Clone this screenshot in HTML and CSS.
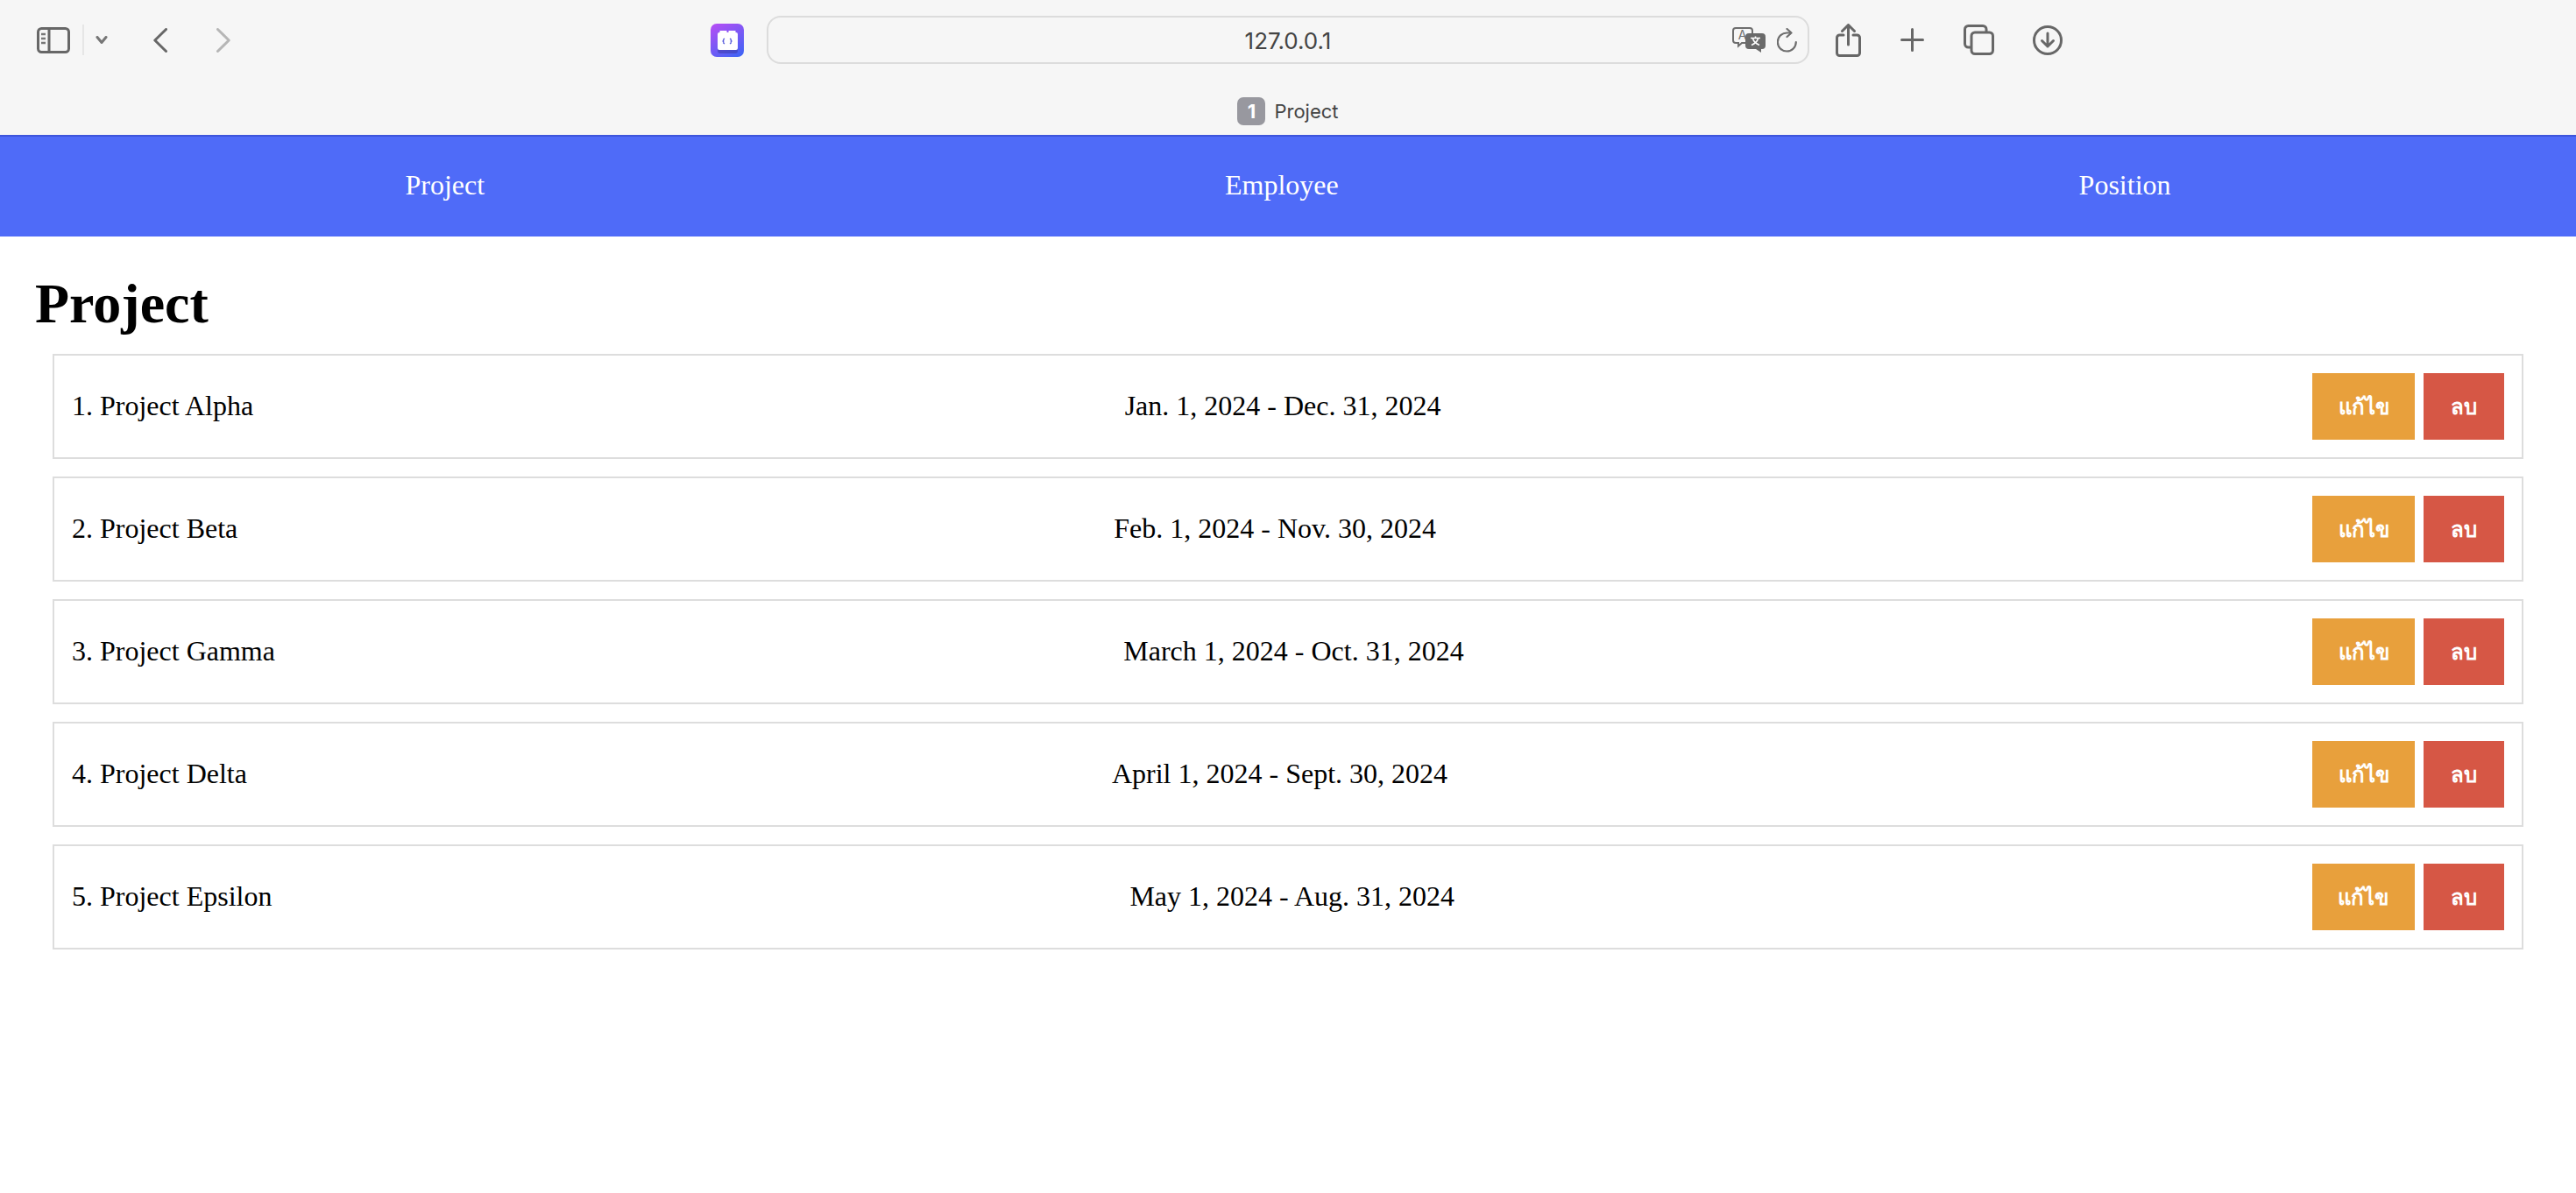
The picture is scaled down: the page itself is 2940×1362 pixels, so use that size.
FILE: index.html
```html
<!DOCTYPE html>
<html lang="th">

<head>
  <meta charset="UTF-8">
  <meta name="viewport" content="width=device-width, initial-scale=1.0">
  <title>Project</title>
  <link rel="stylesheet" href="styles.css">
</head>

<body>

  <div class="browser">
    <div class="toolbar">
      <svg class="ic sidebar-ic" width="38" height="30" viewBox="0 0 38 30" fill="none" stroke="#676767" stroke-width="3">
        <rect x="1.500" y="1.500" width="35" height="27" rx="4"/>
        <path d="M14 1.500v27"/>
        <path d="M5 8h5M5 13h5M5 18h5" stroke-width="2.400" stroke="#777"/>
      </svg>
      <div class="sep"></div>
      <svg class="ic chevron-ic" width="14" height="9" viewBox="0 0 14 9" fill="none" stroke="#767676" stroke-width="3" stroke-linecap="round" stroke-linejoin="round">
        <path d="M2 1.500l5 6 5-6"/>
      </svg>
      <svg class="ic back-ic" width="16" height="28" viewBox="0 0 16 28" fill="none" stroke="#676767" stroke-width="3" stroke-linecap="round" stroke-linejoin="round">
        <path d="M14.500 1.500L1.800 14l12.700 12.500"/>
      </svg>
      <svg class="ic forward-ic" width="16" height="28" viewBox="0 0 16 28" fill="none" stroke="#b6b6b6" stroke-width="3" stroke-linecap="round" stroke-linejoin="round">
        <path d="M1.500 1.500L14.200 14 1.500 26.500"/>
      </svg>

      <svg class="ic favicon" width="38" height="38" viewBox="0 0 38 38">
        <defs>
          <linearGradient id="favGrad" x1="0.2" y1="0" x2="0.8" y2="1">
            <stop offset="0" stop-color="#b04ff5"/>
            <stop offset="1" stop-color="#4263f5"/>
          </linearGradient>
        </defs>
        <rect width="38" height="38" rx="7" fill="url(#favGrad)"/>
        <rect x="8" y="26" width="23" height="8" rx="3" fill="#3a3aa8" opacity="0.55"/>
        <path d="M8 12a2 2 0 0 1 2-2h0.500v-2h8v2h2v-2h8v2h0.500a2 2 0 0 1 2 2v16a2 2 0 0 1-2 2H10a2 2 0 0 1-2-2z" fill="#fff"/>
        <path d="M16 17l-1.200 0.800v1.400l-0.800 0.800 0.800 0.800v1.400l1.200 0.800M22 17l1.200 0.800v1.400l0.800 0.800-0.800 0.800v1.400l-1.200 0.800" fill="none" stroke="#4a4fd8" stroke-width="1.200"/>
      </svg>

      <div class="address">
        <span class="url">127.0.0.1</span>
        <svg class="ic translate-ic" width="38" height="29" viewBox="0 0 38 29">
          <path d="M4 1h16a3 3 0 0 1 3 3v11a3 3 0 0 1-3 3h-9l-4 3.500v-3.500h-3a3 3 0 0 1-3-3v-11a3 3 0 0 1 3-3z" fill="none" stroke="#6e6e6e" stroke-width="2"/>
          <text x="11.500" y="14" class="translate-a">A</text>
          <path d="M19 7h15a4 4 0 0 1 4 4v10a4 4 0 0 1-4 4h-1v4l-6-4h-8a4 4 0 0 1-4-4v-10a4 4 0 0 1 4-4z" fill="#6a6a6a"/>
          <path d="M21 12.500h11M26.500 10.500v2M23.500 13c1 3.500 4 6 7.500 7.500M29.500 13c-1 3.500-4 6-7.500 7.500" fill="none" stroke="#fff" stroke-width="1.600"/>
        </svg>
        <svg class="ic reload-ic" width="23" height="28" viewBox="0 0 23 28" fill="none" stroke="#6e6e6e" stroke-width="2.200" stroke-linecap="round" stroke-linejoin="round">
          <path d="M21.800 16a10.500 10.500 0 1 1-10.500-10.500h4"/>
          <path d="M11.500 1l5 4.500-5 4.500"/>
        </svg>
      </div>

      <svg class="ic share-ic" width="29" height="38" viewBox="0 0 29 38" fill="none" stroke="#676767" stroke-width="3" stroke-linecap="round" stroke-linejoin="round">
        <path d="M9 13H4.500a3 3 0 0 0-3 3v17.500a3 3 0 0 0 3 3h20a3 3 0 0 0 3-3V16a3 3 0 0 0-3-3H20"/>
        <path d="M14.500 24V2M7.500 8.500l7-7 7 7"/>
      </svg>
      <svg class="ic plus-ic" width="27" height="27" viewBox="0 0 27 27" fill="none" stroke="#676767" stroke-width="3" stroke-linecap="round">
        <path d="M13.500 1.500v24M1.500 13.500h24"/>
      </svg>
      <svg class="ic tabs-ic" width="35" height="35" viewBox="0 0 35 35" fill="none" stroke="#676767" stroke-width="3" stroke-linejoin="round">
        <path d="M8 26H5.500a4 4 0 0 1-4-4V5.500a4 4 0 0 1 4-4H22a4 4 0 0 1 4 4V8"/>
        <rect x="9" y="9" width="24.500" height="24.500" rx="4"/>
      </svg>
      <svg class="ic download-ic" width="34" height="34" viewBox="0 0 34 34" fill="none" stroke="#676767" stroke-width="3" stroke-linecap="round" stroke-linejoin="round">
        <circle cx="17" cy="17" r="15.500"/>
        <path d="M17 9v15M10.500 17.500L17 24l6.500-6.500"/>
      </svg>
    </div>

    <div class="tabstrip">
      <span class="tab-count">1</span>
      <span class="tab-title">Project</span>
    </div>
  </div>

  <nav class="navbar">
    <a href="#">Project</a>
    <a href="#">Employee</a>
    <a href="#">Position</a>
  </nav>

  <h1>Project</h1>

  <ul class="project-list">
    <li class="project-row">
      <span>1. Project Alpha</span>
      <span>Jan. 1, 2024 - Dec. 31, 2024</span>
      <div class="actions">
        <button class="btn btn-edit">แก้ไข</button>
        <button class="btn btn-delete">ลบ</button>
      </div>
    </li>
    <li class="project-row">
      <span>2. Project Beta</span>
      <span>Feb. 1, 2024 - Nov. 30, 2024</span>
      <div class="actions">
        <button class="btn btn-edit">แก้ไข</button>
        <button class="btn btn-delete">ลบ</button>
      </div>
    </li>
    <li class="project-row">
      <span>3. Project Gamma</span>
      <span>March 1, 2024 - Oct. 31, 2024</span>
      <div class="actions">
        <button class="btn btn-edit">แก้ไข</button>
        <button class="btn btn-delete">ลบ</button>
      </div>
    </li>
    <li class="project-row">
      <span>4. Project Delta</span>
      <span>April 1, 2024 - Sept. 30, 2024</span>
      <div class="actions">
        <button class="btn btn-edit">แก้ไข</button>
        <button class="btn btn-delete">ลบ</button>
      </div>
    </li>
    <li class="project-row">
      <span>5. Project Epsilon</span>
      <span>May 1, 2024 - Aug. 31, 2024</span>
      <div class="actions">
        <button class="btn btn-edit">แก้ไข</button>
        <button class="btn btn-delete">ลบ</button>
      </div>
    </li>
  </ul>

</body>

</html>
```

FILE: styles.css
```css
body {
  margin: 0;
  font-family: "Liberation Serif", serif;
  font-size: 32px;
  color: #000;
  background-color: #fff;
}

/* browser chrome */
.browser {
  height: 154px;
  background-color: #f6f6f6;
  font-family: Inter, "Noto Sans", sans-serif;
}

.toolbar {
  display: flex;
  align-items: center;
  height: 91px;
  padding-left: 42px;
}

.ic {
  display: block;
  flex: none;
}

.sep {
  width: 2px;
  height: 35px;
  margin-left: 14px;
  background-color: #e6e6e6;
}

.chevron-ic {
  margin-left: 13px;
}

.back-ic {
  margin-left: 52px;
}

.forward-ic {
  margin-left: 56px;
}

.favicon {
  margin-left: 548px;
}

.address {
  display: flex;
  align-items: center;
  justify-content: flex-end;
  position: relative;
  width: 1190px;
  height: 55px;
  margin-left: 26px;
  padding-right: 12px;
  box-sizing: border-box;
  border: 2px solid #dcdcdc;
  border-radius: 16px;
  background-color: #f6f6f6;
}

.url {
  position: absolute;
  left: 0;
  right: 0;
  padding-top: 2px;
  text-align: center;
  font-size: 26px;
  color: #444;
}

.translate-a {
  font-family: Inter, sans-serif;
  font-size: 14px;
  fill: #6e6e6e;
  text-anchor: middle;
}

.reload-ic {
  margin-left: 13px;
}

.share-ic {
  margin-left: 30px;
}

.plus-ic {
  margin-left: 45px;
}

.tabs-ic {
  margin-left: 45px;
}

.download-ic {
  margin-left: 44px;
}

.tabstrip {
  display: flex;
  align-items: center;
  justify-content: center;
  gap: 10px;
  height: 63px;
  padding-top: 9px;
  box-sizing: border-box;
}

.tab-count {
  width: 32px;
  height: 32px;
  border-radius: 7px;
  background-color: #98989f;
  color: #fff;
  font-size: 22px;
  font-weight: 700;
  line-height: 32px;
  text-align: center;
}

.tab-title {
  font-size: 22px;
  color: #444;
}

/* page */
.navbar {
  display: flex;
  justify-content: space-around;
  padding: 39px 40px 41px;
  background-color: #4f6bf8;
  box-shadow: inset 0 2px 0 #3d55dc;
  line-height: 36px;
}

.navbar a {
  color: #fff;
  text-decoration: none;
}

h1 {
  margin: 40px 0 20px 40px;
  font-size: 64px;
  line-height: 74px;
}

.project-list {
  margin: 0 60px;
  padding: 0;
  list-style: none;
}

.project-row {
  display: flex;
  justify-content: space-between;
  align-items: center;
  margin-bottom: 20px;
  padding: 20px;
  border: 2px solid #ddd;
}

.project-row > span {
  padding-bottom: 2px;
}

.actions {
  display: flex;
  gap: 10px;
}

.btn {
  height: 76px;
  padding: 0;
  border: none;
  color: #fff;
  font-family: "Liberation Sans", "Noto Sans", sans-serif;
  font-size: 24px;
  font-weight: 700;
}

.btn-edit {
  width: 117px;
  background-color: #e8a03c;
}

.btn-delete {
  width: 92px;
  background-color: #d65745;
}
```
